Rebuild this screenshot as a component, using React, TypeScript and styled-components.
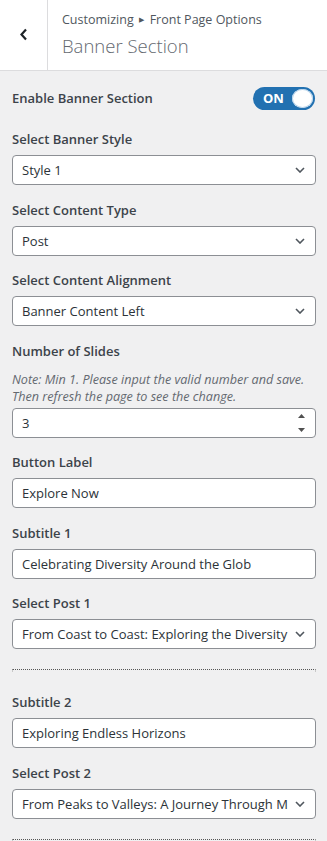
import React from 'react';
import styled, { createGlobalStyle } from 'styled-components';

const GlobalStyle = createGlobalStyle`
  html, body {
    margin: 0;
    padding: 0;
    background: #f0f0f1;
  }
  body {
    font-family: "Open Sans", "Noto Sans", Arial, sans-serif;
    color: #3c434a;
  }
  * { box-sizing: border-box; }
`;

const Panel = styled.div`
  width: 327px;
  min-height: 841px;
  background: #f0f0f1;
`;

const Header = styled.header`
  display: flex;
  height: 71px;
  background: #fff;
  border-bottom: 1px solid #dcdcde;
`;

const BackButton = styled.button`
  width: 48px;
  flex: none;
  display: flex;
  align-items: center;
  justify-content: center;
  padding: 0 0 2px;
  background: #fff;
  border: none;
  border-right: 1px solid #dcdcde;
  color: #1d2327;
  cursor: pointer;
`;

const TitleBlock = styled.div`
  padding: 10px 0 0 14px;
  color: #50575e;
`;

const Crumbs = styled.div`
  font-size: 12.5px;
  line-height: 20px;
  color: #50575e;
`;

const Arrow = styled.span`
  display: inline-block;
  font-size: 7px;
  vertical-align: 2px;
  margin: 0 6px 0 5px;
`;

const Title = styled.h2`
  margin: 3px 0 0;
  font-size: 18.5px;
  line-height: 26px;
  font-weight: 300;
  color: #646970;
`;

const Body = styled.div`
  padding: 16px 11px 0 12px;
`;

const ToggleRow = styled.div`
  display: flex;
  align-items: center;
  justify-content: space-between;
  height: 22px;
  margin-bottom: 20px;
`;

const Label = styled.div`
  font-size: 13px;
  font-weight: 600;
  line-height: 20px;
  color: #3c434a;
`;

const Toggle = styled.div`
  width: 62px;
  height: 23px;
  margin-right: 1px;
  border-radius: 12px;
  background: #2271b1;
  display: flex;
  align-items: center;
  justify-content: space-between;
  padding: 0 2px 0 10px;
`;

const ToggleText = styled.span`
  color: #fff;
  font-size: 13px;
  font-weight: 700;
  line-height: 1;
`;

const Knob = styled.span`
  width: 21px;
  height: 19px;
  border-radius: 50%;
  background: #fff;
  box-shadow: inset 0 0 0 1px #b8d3ea;
`;

const Field = styled.div<{ $tight?: boolean }>`
  display: flex;
  flex-direction: column;
  margin-bottom: ${({ $tight }) => ($tight ? '20px' : '14.5px')};
`;

const FieldLabel = styled(Label)`
  margin-bottom: 6px;
`;

const Note = styled.div`
  font-size: 12.6px;
  font-style: italic;
  line-height: 17px;
  color: #646970;
  margin: 10px 0 3px;
  white-space: nowrap;
`;

const Box = styled.div`
  display: flex;
  align-items: center;
  height: 30px;
  background: #fff;
  border: 1px solid #8c8f94;
  border-radius: 4px;
  overflow: hidden;
`;

const Value = styled.span<{ $pr?: number }>`
  flex: 1;
  min-width: 0;
  padding: 0 ${({ $pr }) => $pr ?? 8}px 0 9px;
  font-size: 13px;
  line-height: 28px;
  color: #2c3338;
  white-space: nowrap;
  overflow: hidden;
`;

const Chevron = styled.svg`
  flex: none;
  margin-right: 10px;
`;

const Spinner = styled.div`
  flex: none;
  width: 16px;
  height: 26px;
  margin-right: 6px;
  display: flex;
  flex-direction: column;
  align-items: center;
  justify-content: space-between;
  padding: 4px 0;
`;

const Divider = styled.hr`
  margin: 0 0 20px;
  height: 3px;
  border: none;
  border-top: 1px dotted #555;
  border-left: 1px solid #c8c8c8;
  border-right: 1px solid #c8c8c8;
`;

const SelectField = ({ label, value, tight }: { label: string; value: string; tight?: boolean }) => (
  <Field $tight={tight}>
    <FieldLabel>{label}</FieldLabel>
    <Box>
      <Value $pr={4}>{value}</Value>
      <Chevron width="10" height="6" viewBox="0 0 10 6">
        <path d="M1 1l4 4 4-4" fill="none" stroke="#50575e" strokeWidth="1.6" />
      </Chevron>
    </Box>
  </Field>
);

const TextField = ({ label, value }: { label: string; value: string }) => (
  <Field>
    <FieldLabel>{label}</FieldLabel>
    <Box>
      <Value>{value}</Value>
    </Box>
  </Field>
);

export default function App() {
  return (
    <Panel>
      <GlobalStyle />
      <Header>
        <BackButton aria-label="Back">
          <svg width="9" height="13" viewBox="0 0 9 13">
            <path d="M7 1.5L2.5 6.5 7 11.5" fill="none" stroke="#1d2327" strokeWidth="2.2" />
          </svg>
        </BackButton>
        <TitleBlock>
          <Crumbs>
            Customizing<Arrow>▶</Arrow>Front Page Options
          </Crumbs>
          <Title>Banner Section</Title>
        </TitleBlock>
      </Header>

      <Body>
        <ToggleRow>
          <Label>Enable Banner Section</Label>
          <Toggle>
            <ToggleText>ON</ToggleText>
            <Knob />
          </Toggle>
        </ToggleRow>

        <SelectField label="Select Banner Style" value="Style 1" />
        <SelectField label="Select Content Type" value="Post" />
        <SelectField label="Select Content Alignment" value="Banner Content Left" />

        <Field>
          <Label>Number of Slides</Label>
          <Note>
            Note: Min 1. Please input the valid number and save.
            <br />
            Then refresh the page to see the change.
          </Note>
          <Box>
            <Value>3</Value>
            <Spinner>
              <svg width="7" height="4" viewBox="0 0 7 4">
                <path d="M0 4L3.5 0 7 4z" fill="#505050" />
              </svg>
              <svg width="7" height="4" viewBox="0 0 7 4">
                <path d="M0 0L3.5 4 7 0z" fill="#505050" />
              </svg>
            </Spinner>
          </Box>
        </Field>

        <TextField label="Button Label" value="Explore Now" />
        <TextField label="Subtitle 1" value="Celebrating Diversity Around the Glob" />
        <SelectField label="Select Post 1" value="From Coast to Coast: Exploring the Diversity" tight />
        <Divider />

        <TextField label="Subtitle 2" value="Exploring Endless Horizons" />
        <SelectField label="Select Post 2" value="From Peaks to Valleys: A Journey Through M" tight />
        <Divider />
      </Body>
    </Panel>
  );
}
